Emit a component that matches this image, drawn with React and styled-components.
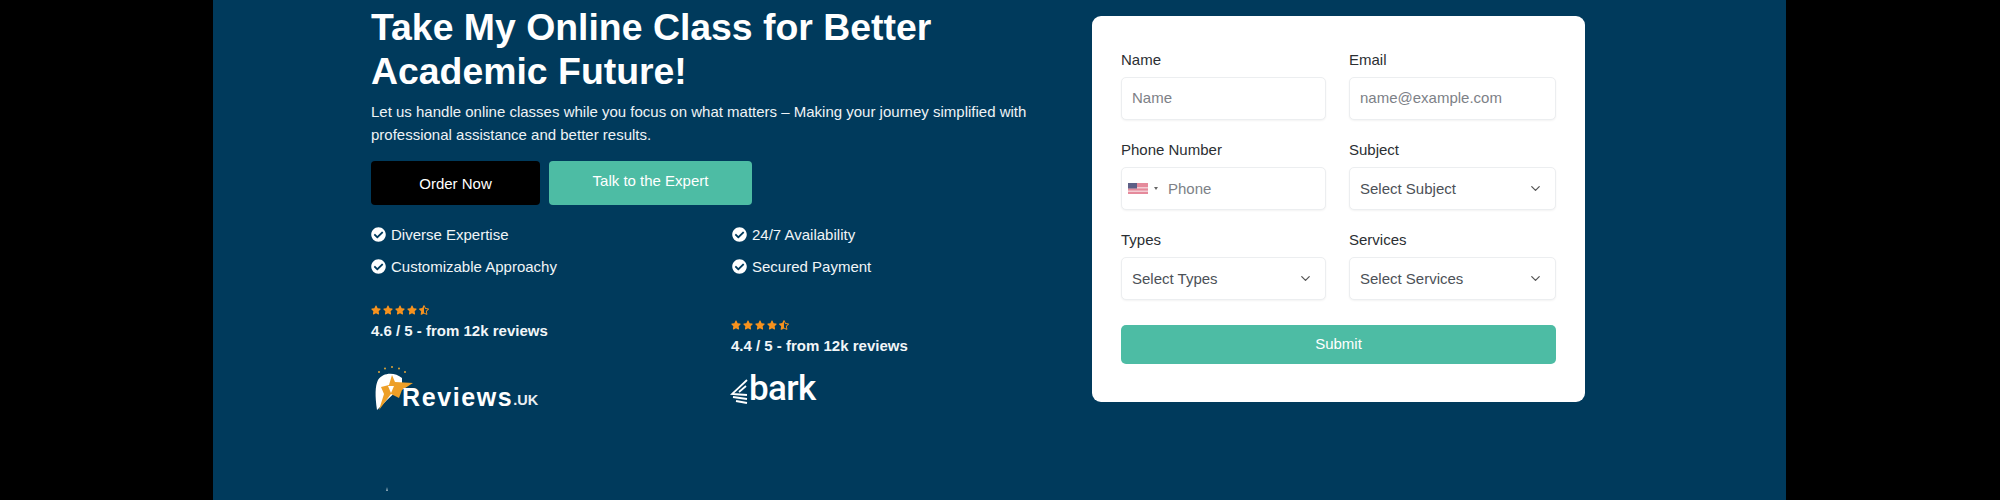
import React from 'react';
import styled, { createGlobalStyle } from 'styled-components';
import { ChevronDown } from 'lucide-react';
import { FaCheckCircle, FaStar, FaStarHalfAlt } from 'react-icons/fa';

const Global = createGlobalStyle`
  html, body { margin: 0; padding: 0; height: 500px; overflow: hidden; background: #000; }
  * { box-sizing: border-box; }
  body { font-family: "Liberation Sans", Arial, sans-serif; }
`;

const Page = styled.main`
  width: 2000px; height: 500px; background: #000; padding-left: 213px; overflow: hidden;
`;
const Hero = styled.section`
  width: 1573px; height: 500px; background: #003a5c; padding: 0 201px 0 158px;
  display: grid; grid-template-columns: 721px 493px; align-items: start;
`;
const Left = styled.div`display: flex; flex-direction: column; padding-top: 5px;`;
const Heading = styled.h1`
  margin: 0; color: #fff; font-size: 37.4px; line-height: 44px; font-weight: 700; max-width: 640px;
`;
const Lead = styled.p`
  margin: 7px 0 0; color: #eef3f6; font-size: 15px; line-height: 23px; max-width: 680px;
`;
const Actions = styled.div`display: flex; gap: 9px; margin-top: 15px;`;
const Btn = styled.a`
  height: 44px; border-radius: 4px; display: flex; justify-content: center; color: #fff; font-size: 15px;
  width: ${p => p.$w}px; background: ${p => p.$bg};
  align-items: ${p => p.$top ? 'flex-start' : 'center'};
  padding-top: ${p => p.$top ? '11px' : '0'};
`;
const Features = styled.ul`
  list-style: none; margin: 19px 0 0; padding: 0; display: grid; grid-template-columns: 361px 361px; row-gap: 12px;
`;
const Feature = styled.li`
  display: flex; align-items: center; gap: 5px; color: #f1f5f7; font-size: 15px; height: 20px;
  svg { width: 15px; height: 15px; color: #fff; flex: none; }
`;
const Ratings = styled.div`display: grid; grid-template-columns: 360px 360px; margin-top: 28px;`;
const Rating = styled.div`display: flex; flex-direction: column; padding-top: ${p => p.$offset}px;`;
const Stars = styled.div`
  display: flex; gap: 2px; height: 12px; align-items: center; color: #f6921e;
  svg { width: 10px; height: 10px; }
`;
const Score = styled.div`
  margin-top: 6px; color: #f2f6f8; font-size: 15px; line-height: 18px; font-weight: 700;
`;
const LogoRow = styled.div`display: flex; align-items: flex-end; height: ${p => p.$h}px; margin-top: ${p => p.$m}px;`;
const ReviewsMark = styled.svg`width: 44px; height: 46px; margin-left: 4px; margin-right: -17px; flex: none;`;
const ReviewsWord = styled.span`
  color: #fff; font-size: 25px; font-weight: 700; letter-spacing: 1.6px; line-height: 28px; margin-bottom: 1px;
`;
const ReviewsTld = styled.span`color: #e8eef2; font-size: 14.5px; font-weight: 700; line-height: 18px; margin-bottom: 3px;`;
const BarkMark = styled.svg`width: 20px; height: 26px; margin-right: 0; margin-left: -1px; flex: none;`;
const BarkWord = styled.span`
  color: #fff; font-family: Roboto, "Liberation Sans", sans-serif; font-weight: 500; font-size: 35px;
  line-height: 30px; letter-spacing: -0.6px; margin-bottom: 1px; margin-left: -1px;
`;
const BottomMark = styled.svg`width: 10px; height: 4px; margin: 75px 0 0 11px; flex: none;`;

const Card = styled.form`
  margin-top: 16px; height: 386px; background: #fff; border-radius: 9px; padding: 34px 29px 0 29px;
  display: flex; flex-direction: column;
`;
const Grid = styled.div`display: grid; grid-template-columns: 205px 207px; column-gap: 23px; row-gap: 8px;`;
const Field = styled.div`display: flex; flex-direction: column; gap: 7px; height: 82px;`;
const Label = styled.label`color: #2b2f33; font-size: 15px; line-height: 20px;`;
const boxStyle = `
  height: 43px; border: 1px solid #eceef0; border-radius: 5px; background: #fff; font-size: 15px;
  box-shadow: 0 1px 2px rgba(0,0,0,.05); font-family: "Liberation Sans", Arial, sans-serif;
`;
const Input = styled.input`
  ${boxStyle}
  width: 100%; padding: 0 0 2px 10px; outline: none;
  &::placeholder { color: #7d8187; opacity: 1; }
`;
const PhoneBox = styled.div`${boxStyle} display: flex; align-items: center; padding: 0 6px;`;
const Flag = styled.svg`width: 20px; height: 11px; flex: none;`;
const Caret = styled.span`
  width: 0; height: 0; border: 2px solid transparent; border-top: 3px solid #666; border-bottom: 0; margin: 0 10px 0 6px;
`;
const PhoneInput = styled.input`
  border: 0; outline: 0; flex: 1; min-width: 0; padding: 0; font-size: 15px; font-family: inherit;
  &::placeholder { color: #7d8187; opacity: 1; }
`;
const SelectBox = styled.div`
  ${boxStyle}
  display: flex; align-items: center; justify-content: space-between; padding: 0 12px 0 10px; color: #4c5157;
  svg { width: 15px; height: 15px; color: #555; }
`;
const Submit = styled.button`
  margin-top: 13px; height: 39px; border: 0; border-radius: 5px; background: #4dbca4; color: #fff;
  font-size: 15px; font-family: inherit; padding: 0 0 2px;
`;

const StarRow = () => (
  <Stars><FaStar /><FaStar /><FaStar /><FaStar /><FaStarHalfAlt /></Stars>
);
const Select = ({ label, text }) => (
  <Field>
    <Label>{label}</Label>
    <SelectBox>{text}<ChevronDown /></SelectBox>
  </Field>
);

export default function App() {
  return (
    <Page>
      <Global />
      <Hero>
        <Left>
          <Heading>Take My Online Class for Better Academic Future!</Heading>
          <Lead>Let us handle online classes while you focus on what matters – Making your journey simplified with professional assistance and better results.</Lead>
          <Actions>
            <Btn $w={169} $bg="#000">Order Now</Btn>
            <Btn $w={203} $bg="#4dbca4" $top>Talk to the Expert</Btn>
          </Actions>
          <Features>
            <Feature><FaCheckCircle />Diverse Expertise</Feature>
            <Feature><FaCheckCircle />24/7 Availability</Feature>
            <Feature><FaCheckCircle />Customizable Approachy</Feature>
            <Feature><FaCheckCircle />Secured Payment</Feature>
          </Features>
          <Ratings>
            <Rating $offset={0}>
              <StarRow />
              <Score>4.6 / 5 - from 12k reviews</Score>
              <LogoRow $h={46} $m={26}>
                <ReviewsMark viewBox="0 0 44 46">
                  <g fill="#e0a63a">
                    <circle cx="4" cy="6" r="1" /><circle cx="10" cy="2.5" r="1" /><circle cx="17" cy="1" r="1" /><circle cx="24" cy="2.5" r="1" /><circle cx="30" cy="6" r="1" />
                  </g>
                  <path d="M2 44 C0 30 0 20 3 14 C8 6 20 6 27 12 L27 20 L12 34 Z" fill="#fff" />
                  <path d="M17 9 L20 16 L38 17 L27 24 L24 32 L16 28 L4 44 L9 28 L6 21 L14 19 Z" fill="#ed9f27" />
                  <path d="M13 20 L19 20 L16 27 Z" fill="#fff" />
                </ReviewsMark>
                <ReviewsWord>Reviews</ReviewsWord>
                <ReviewsTld>.UK</ReviewsTld>
              </LogoRow>
            </Rating>
            <Rating $offset={15}>
              <StarRow />
              <Score>4.4 / 5 - from 12k reviews</Score>
              <LogoRow $h={30} $m={20}>
                <BarkMark viewBox="0 0 20 26" fill="none" stroke="#fff" strokeWidth="1.8">
                  <path d="M17 1 L2 15 L17 16" />
                  <path d="M16 7 L9 13" />
                  <path d="M3 18 L17 20" />
                  <path d="M6 22 L17 24" />
                </BarkMark>
                <BarkWord>bark</BarkWord>
              </LogoRow>
            </Rating>
          </Ratings>
          <BottomMark viewBox="0 0 10 4"><path d="M5 0 L6 4 L4 4 Z" fill="#8fa9b8" /></BottomMark>
        </Left>
        <Card>
          <Grid>
            <Field><Label>Name</Label><Input placeholder="Name" /></Field>
            <Field><Label>Email</Label><Input placeholder="name@example.com" /></Field>
            <Field>
              <Label>Phone Number</Label>
              <PhoneBox>
                <Flag viewBox="0 0 20 11">
                  <rect width="20" height="11" fill="#e58a9b" />
                  <rect y="4" width="20" height="1.5" fill="#f3ccd3" />
                  <rect y="7.5" width="20" height="1.5" fill="#f3ccd3" />
                  <rect width="9" height="5.5" fill="#5d5f86" />
                </Flag>
                <Caret />
                <PhoneInput placeholder="Phone" />
              </PhoneBox>
            </Field>
            <Select label="Subject" text="Select Subject" />
            <Select label="Types" text="Select Types" />
            <Select label="Services" text="Select Services" />
          </Grid>
          <Submit type="button">Submit</Submit>
        </Card>
      </Hero>
    </Page>
  );
}
